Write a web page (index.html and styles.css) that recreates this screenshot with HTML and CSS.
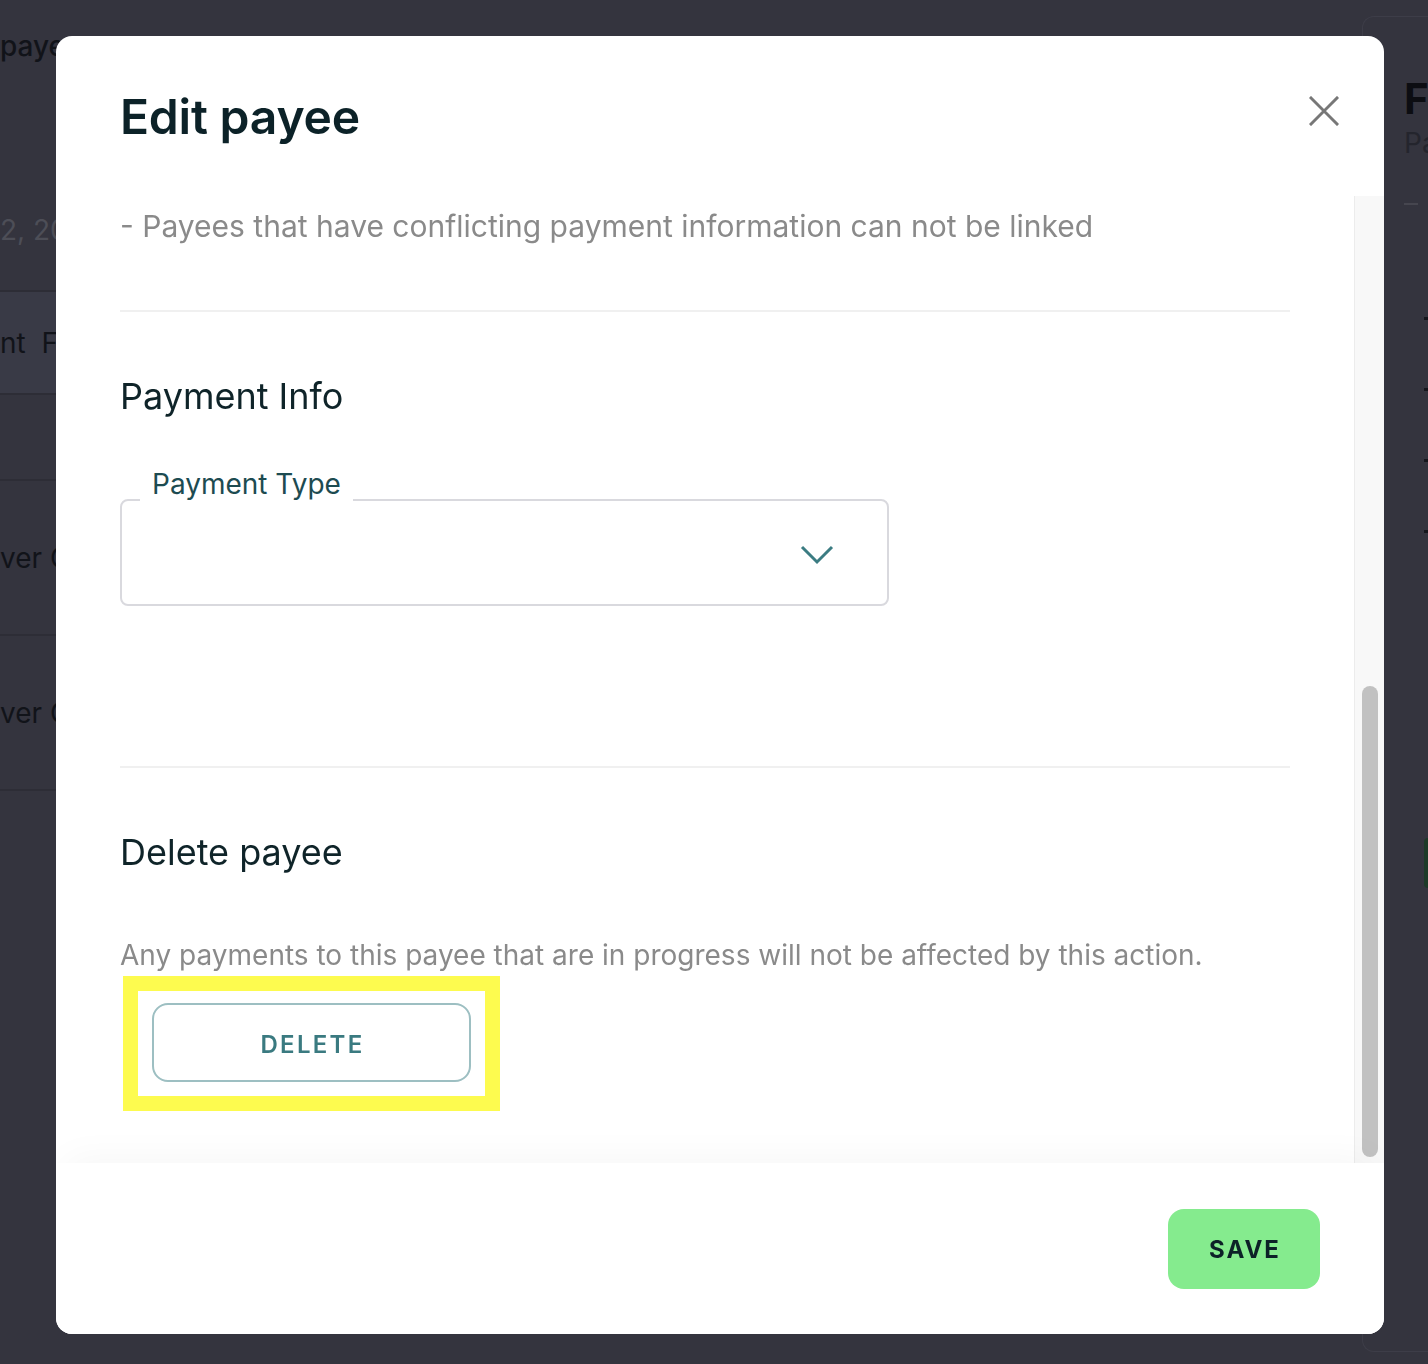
FILE: index.html
```html
<!DOCTYPE html>
<html>
<head>
    <meta charset="UTF-8">
    <meta name="viewport" content="width=device-width, initial-scale=1.0">
    <title>Edit payee</title>
    <link rel="stylesheet" href="styles.css">
</head>
<body>
    <div class="page">
        <div class="list">
            <div class="list-title">payees</div>
            <div class="list-date">2, 2023</div>
            <div class="list-row active">nt  Failed</div>
            <div class="list-row empty"></div>
            <div class="list-row tall">ver Co</div>
            <div class="list-row tall">ver Co</div>
        </div>
        <div class="side-card">
            <div class="side-title">F</div>
            <div class="side-sub">Pa</div>
            <div class="side-dash"></div>
            <div class="side-marks">
                <span></span><span></span><span></span><span></span>
            </div>
            <div class="side-chip"></div>
        </div>
    </div>

    <div class="modal">
        <div class="modal-header">
            <h1>Edit payee</h1>
            <button class="close" aria-label="Close">
                <svg width="30" height="30" viewBox="0 0 30 30">
                    <path d="M2 2 L28 28 M28 2 L2 28" stroke="#777" stroke-width="3" stroke-linecap="square"/>
                </svg>
            </button>
        </div>

        <div class="modal-body">
            <div class="body-content">
                <p class="note first">- Payees that have conflicting payment information can not be linked</p>
                <hr>

                <h2>Payment Info</h2>
                <div class="select">
                    <span class="select-label">Payment Type</span>
                    <svg class="chevron" width="34" height="20" viewBox="0 0 34 20">
                        <path d="M2 2 L17 17 L32 2" fill="none" stroke="#3b7c82" stroke-width="3"/>
                    </svg>
                </div>
                <hr class="wide-gap">

                <h2>Delete payee</h2>
                <p class="note">Any payments to this payee that are in progress will not be affected by this action.</p>
                <div class="highlight">
                    <button class="btn-delete">DELETE</button>
                </div>
            </div>
            <div class="scrollbar">
                <div class="thumb"></div>
            </div>
        </div>

        <div class="modal-footer">
            <button class="btn-save">SAVE</button>
        </div>
    </div>
</body>
</html>
```

FILE: styles.css
```css
body {
    margin: 0;
    background: #34343e;
    font-family: Inter, "Noto Sans", sans-serif;
    height: 1364px;
    overflow: hidden;
}

/* dimmed page behind the modal */
.page {
    display: flex;
}

.list {
    width: 1362px;
    flex-shrink: 0;
    color: #111319;
}

.list-title {
    font-size: 28px;
    font-weight: 500;
    line-height: 40px;
    padding-top: 26px;
}

.list-date {
    font-size: 28px;
    line-height: 40px;
    color: #4d4e57;
    margin-top: 144px;
    height: 80px;
    border-bottom: 2px solid #2d2d36;
}

.list-row {
    font-size: 28px;
    line-height: 40px;
    border-bottom: 2px solid #2d2d36;
    display: flex;
    align-items: center;
    white-space: pre;
}

.list-row.active {
    height: 101px;
    background: #393a46;
}

.list-row.empty {
    height: 84px;
}

.list-row.tall {
    height: 153px;
}

.side-card {
    flex: 1;
    min-width: 0;
    overflow: hidden;
    margin-top: 16px;
    height: 1334px;
    border: 1px solid #3d3d48;
    border-right: none;
    border-radius: 12px 0 0 12px;
    padding-left: 41px;
}

.side-title {
    font-size: 42px;
    font-weight: 700;
    color: #0c0d12;
    line-height: 48px;
    margin-top: 58px;
}

.side-sub {
    font-size: 28px;
    color: #24252d;
    line-height: 40px;
}

.side-dash {
    width: 14px;
    height: 2px;
    background: #46464f;
    margin-top: 40px;
}

.side-marks {
    display: flex;
    flex-direction: column;
    gap: 68px;
    margin: 112px 0 0 20px;
}

.side-marks span {
    width: 4px;
    height: 3px;
    background: #15161c;
}

.side-chip {
    width: 6px;
    height: 50px;
    margin: 305px 0 0 20px;
    border-radius: 4px 0 0 4px;
    background: #1d3a28;
}

/* modal */
.modal {
    position: fixed;
    top: 36px;
    left: 56px;
    width: 1328px;
    height: 1298px;
    background: #fff;
    border-radius: 16px;
    display: flex;
    flex-direction: column;
    overflow: hidden;
}

.modal-header {
    height: 160px;
    flex-shrink: 0;
    display: flex;
    align-items: center;
    justify-content: space-between;
    padding: 0 45px 0 64px;
}

.modal-header h1 {
    margin: 0;
    font-size: 48px;
    font-weight: 600;
    color: #0c2228;
    letter-spacing: -0.2px;
}

.close {
    border: none;
    background: none;
    padding: 0;
    margin-top: -10px;
    display: flex;
}

.modal-body {
    flex: 1;
    display: flex;
    min-height: 0;
}

.body-content {
    flex: 1;
    padding: 10px 64px 0 64px;
}

.note {
    margin: 0;
    font-size: 28px;
    line-height: 40px;
    color: #8a8a8a;
}

.note.first {
    font-size: 30px;
}

hr {
    border: none;
    height: 2px;
    background: #f0f0f0;
    margin: 64px 0 0 0;
}

hr.wide-gap {
    margin-top: 160px;
}

h2 {
    margin: 62px 0 0 0;
    font-size: 36px;
    font-weight: 400;
    line-height: 44px;
    color: #0f2429;
}

.select {
    position: relative;
    box-sizing: border-box;
    width: 769px;
    height: 107px;
    margin-top: 81px;
    border: 2px solid #d9d9de;
    border-radius: 8px;
    display: flex;
    align-items: center;
    justify-content: flex-end;
    padding-right: 53px;
}

.select-label {
    position: absolute;
    top: -34px;
    left: 18px;
    padding: 0 12px;
    background: #fff;
    font-size: 28px;
    line-height: 34px;
    color: #1d4b51;
}

.chevron {
    margin-top: 4px;
}

.body-content h2 + .note {
    margin-top: 61px;
}

.highlight {
    display: inline-block;
    margin: 1px 0 0 3px;
    border: 15px solid #fdfb4f;
    padding: 12px 14px 14px 14px;
}

.btn-delete {
    display: block;
    width: 319px;
    height: 79px;
    border: 2px solid #9dbfc2;
    border-radius: 16px;
    background: #fff;
    font-family: Inter, "Noto Sans", sans-serif;
    font-size: 24px;
    font-weight: 600;
    letter-spacing: 2.3px;
    color: #3a7a80;
    padding: 4px 0 0 2px;
}

.scrollbar {
    width: 29px;
    border-left: 1px solid #ececec;
    background: #f8f8f8;
}

.thumb {
    width: 16px;
    height: 471px;
    margin: 490px 0 0 7px;
    background: #c1c1c1;
    border-radius: 8px;
}

.modal-footer {
    height: 171px;
    flex-shrink: 0;
    display: flex;
    align-items: center;
    justify-content: flex-end;
    padding-right: 64px;
    background: #fff;
    box-shadow: 0 -14px 36px -10px rgba(0, 0, 0, 0.04);
}

.btn-save {
    width: 152px;
    height: 80px;
    border: none;
    border-radius: 16px;
    background: #85eb8e;
    font-family: Inter, "Noto Sans", sans-serif;
    font-size: 24px;
    font-weight: 700;
    letter-spacing: 2px;
    color: #0c2127;
    padding: 2px 0 0 2px;
}
```
